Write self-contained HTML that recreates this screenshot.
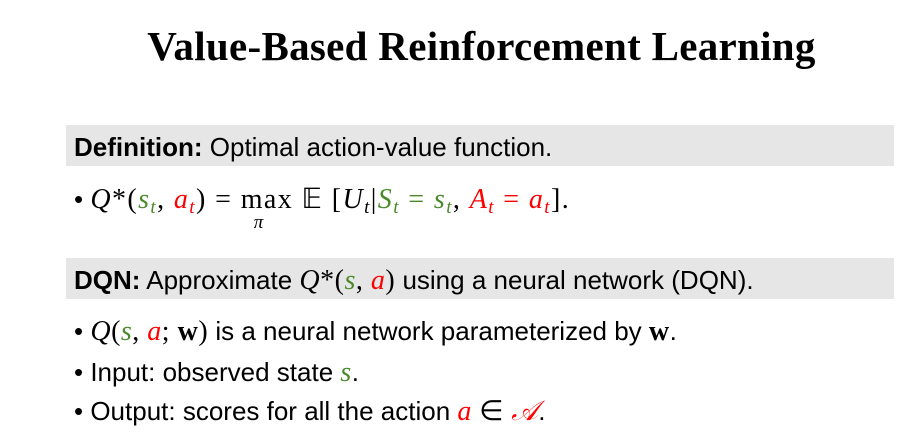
<!DOCTYPE html>
<html><head><style>
body{margin:0;width:901px;height:438px;background:#fff;position:relative;overflow:hidden;font-family:"Liberation Sans",sans-serif;color:#000}
.t{position:absolute;left:0;width:963px;text-align:center;top:22px;font:bold 41px "Liberation Serif",serif;letter-spacing:0.3px}
.box{position:absolute;left:66px;width:828px;height:41px;background:#e6e6e6}
.l{position:absolute;left:74px;font-size:26px;white-space:nowrap;letter-spacing:0;line-height:30px}
.m{font-family:"Liberation Serif",serif;font-style:italic;font-size:28px;letter-spacing:0.5px}
.r{font-family:"Liberation Serif",serif;font-size:28px;font-style:normal;letter-spacing:0.5px}
.w .m,.w .r{letter-spacing:1.4px}
.g{color:#4a8a2a}.red{color:#f00}
sub{font-size:19px;vertical-align:-5px}
</style></head><body>
<div class="t">Value-Based Reinforcement Learning</div>
<div class="box" style="top:125px"></div>
<div class="l" style="top:132px"><b>Definition:</b> Optimal action-value function.</div>
<div class="l w" style="top:184px">• <span class="m">Q</span><span class="r">*(</span><span class="m g">s<sub>t</sub></span><span class="r">, </span><span class="m red">a<sub>t</sub></span><span class="r">) = <span style="position:relative">max<span class="m" style="position:absolute;left:13px;top:24px;font-size:19px">π</span></span> 𝔼 [</span><span class="m">U<sub>t</sub></span><span class="r">|</span><span class="m g">S<sub>t</sub></span><span class="r g"> = </span><span class="m g">s<sub>t</sub></span><span class="r">, </span><span class="m red">A<sub>t</sub></span><span class="r red"> = </span><span class="m red">a<sub>t</sub></span><span class="r">].</span></div>
<div class="box" style="top:258px"></div>
<div class="l" style="top:265px"><b>DQN:</b> Approximate <span class="m">Q</span><span class="r">*(</span><span class="m g">s</span><span class="r">, </span><span class="m red">a</span><span class="r">)</span> using a neural network (DQN).</div>
<div class="l" style="top:316px">• <span class="m">Q</span><span class="r">(</span><span class="m g">s</span><span class="r">, </span><span class="m red">a</span><span class="r">; <b>w</b>)</span> is a neural network parameterized by <span class="r"><b>w</b></span>.</div>
<div class="l" style="top:357px">• Input: observed state <span class="m g">s</span>.</div>
<div class="l" style="top:396px">• Output: scores for all the action <span class="m red">a</span> <span class="r">∈</span> <span class="m red">𝒜</span>.</div>
</body></html>
